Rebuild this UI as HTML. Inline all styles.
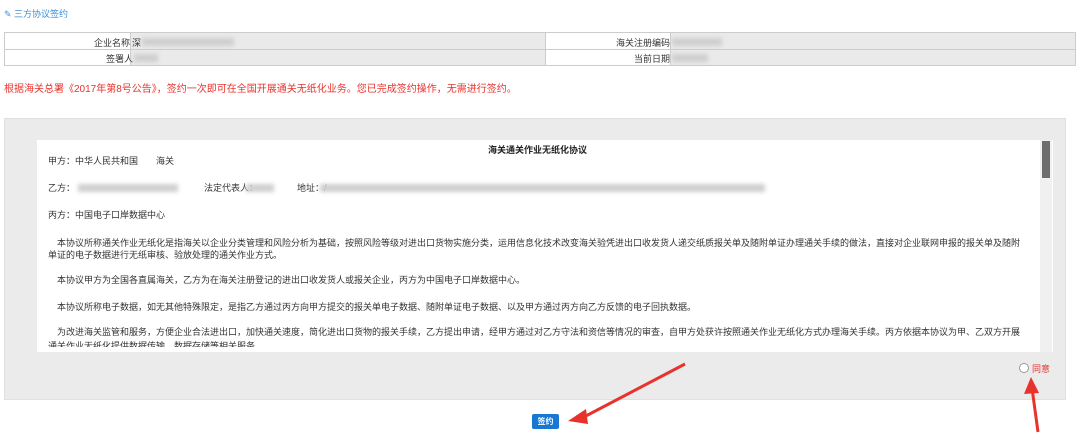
<!DOCTYPE html>
<html><head><meta charset="utf-8"><style>
*{margin:0;padding:0;box-sizing:border-box}
body{width:1080px;height:441px;background:#fff;position:relative;overflow:hidden;font-family:"Liberation Sans","Noto Sans CJK SC",sans-serif;font-size:9px;color:#333}
.a{position:absolute;white-space:nowrap}
.blur{position:absolute;background:#cfcfcf;filter:blur(2px)}
.l{position:absolute;left:48px;white-space:nowrap;overflow:hidden;width:990px;font-size:9px;color:#333}
</style></head><body>
<div class="a" style="left:4px;top:7px;color:#3a8fd8;font-size:9px">&#9998; 三方协议签约</div>
<div class="a" style="left:4px;top:32px;width:1072px;height:34px;border:1px solid #ccc;background:#eaeaea"></div>
<div class="a" style="left:5px;top:33px;width:125px;height:32px;background:#fff"></div>
<div class="a" style="left:545px;top:33px;width:125px;height:32px;background:#fff;border-left:1px solid #ccc"></div>
<div class="a" style="left:5px;top:49px;width:1070px;height:1px;background:#ccc"></div>
<div class="a" style="left:130px;top:33px;width:1px;height:32px;background:#ccc"></div>
<div class="a" style="left:670px;top:33px;width:1px;height:32px;background:#ccc"></div>
<div class="a" style="left:94px;top:36px">企业名称</div><div class="a" style="left:132px;top:36px">深</div><div class="blur" style="left:142px;top:38px;width:92px;height:8px"></div>
<div class="a" style="left:106px;top:52px">签署人</div><div class="blur" style="left:134px;top:54px;width:24px;height:8px"></div>
<div class="a" style="left:616px;top:36px">海关注册编码</div><div class="blur" style="left:672px;top:38px;width:50px;height:8px"></div>
<div class="a" style="left:634px;top:52px">当前日期</div><div class="blur" style="left:672px;top:54px;width:36px;height:8px"></div>
<div class="a" style="left:4px;top:80px;color:#e8332d;font-size:10px">根据海关总署《2017年第8号公告》，签约一次即可在全国开展通关无纸化业务。您已完成签约操作，无需进行签约。</div>
<div class="a" style="left:4px;top:118px;width:1062px;height:282px;background:#ebebeb;border:1px solid #e0e0e0"></div>
<div class="a" style="left:37px;top:140px;width:1016px;height:213px;background:#fff;overflow:hidden">
<div class="a" style="right:1px;top:0;width:12px;height:213px;background:#f0f0f0"></div>
<div class="a" style="right:3px;top:1px;width:8px;height:37px;background:#6d6d6d"></div>
</div>
<div class="a" style="left:488px;top:143px;font-weight:bold;color:#222">海关通关作业无纸化协议</div>
<div class="l" style="top:154px">甲方：中华人民共和国　　海关</div>
<div class="l" style="top:181px">乙方：<span style="display:inline-block;width:120px"></span>　法定代表人：<span style="display:inline-block;width:30px"></span>　地址：/</div>
<div class="blur" style="left:78px;top:184px;width:100px;height:8px"></div>
<div class="blur" style="left:246px;top:184px;width:28px;height:8px"></div>
<div class="blur" style="left:320px;top:184px;width:445px;height:8px"></div>
<div class="l" style="top:208px">丙方：中国电子口岸数据中心</div>
<div class="l" style="top:236px">　本协议所称通关作业无纸化是指海关以企业分类管理和风险分析为基础，按照风险等级对进出口货物实施分类，运用信息化技术改变海关验凭进出口收发货人递交纸质报关单及随附单证办理通关手续的做法，直接对企业联网申报的报关单及随附</div>
<div class="l" style="top:248px">单证的电子数据进行无纸审核、验放处理的通关作业方式。</div>
<div class="l" style="top:273px">　本协议甲方为全国各直属海关，乙方为在海关注册登记的进出口收发货人或报关企业，丙方为中国电子口岸数据中心。</div>
<div class="l" style="top:300px">　本协议所称电子数据，如无其他特殊限定，是指乙方通过丙方向甲方提交的报关单电子数据、随附单证电子数据、以及甲方通过丙方向乙方反馈的电子回执数据。</div>
<div class="l" style="top:325px">　为改进海关监管和服务，方便企业合法进出口，加快通关速度，简化进出口货物的报关手续，乙方提出申请，经甲方通过对乙方守法和资信等情况的审查，自甲方处获许按照通关作业无纸化方式办理海关手续。丙方依据本协议为甲、乙双方开展</div>
<div class="l" style="top:339px;height:8px;overflow:hidden;width:990px">通关作业无纸化提供数据传输、数据存储等相关服务。</div>
<div class="a" style="left:37px;top:352px;width:1016px;height:2px;background:#ebebeb"></div>
<div class="a" style="left:1019px;top:363px;width:10px;height:10px;border:1px solid #999;border-radius:50%;background:#fff"></div>
<div class="a" style="left:1032px;top:362px;color:#e8332d">同意</div>
<div class="a" style="left:532px;top:414px;width:27px;height:15px;background:#1877d2;border-radius:2px;color:#fff;font-size:8px;text-align:center;line-height:15px;font-weight:bold">签约</div>
<svg class="a" style="left:0;top:0" width="1080" height="441">
<line x1="685" y1="364" x2="582" y2="418" stroke="#e8332d" stroke-width="3"/>
<polygon points="568,421 586,409 588,424" fill="#e8332d"/>
<line x1="1038" y1="432" x2="1032" y2="388" stroke="#e8332d" stroke-width="3"/>
<polygon points="1031,377 1024,394 1039,393" fill="#e8332d"/>
</svg>
</body></html>
